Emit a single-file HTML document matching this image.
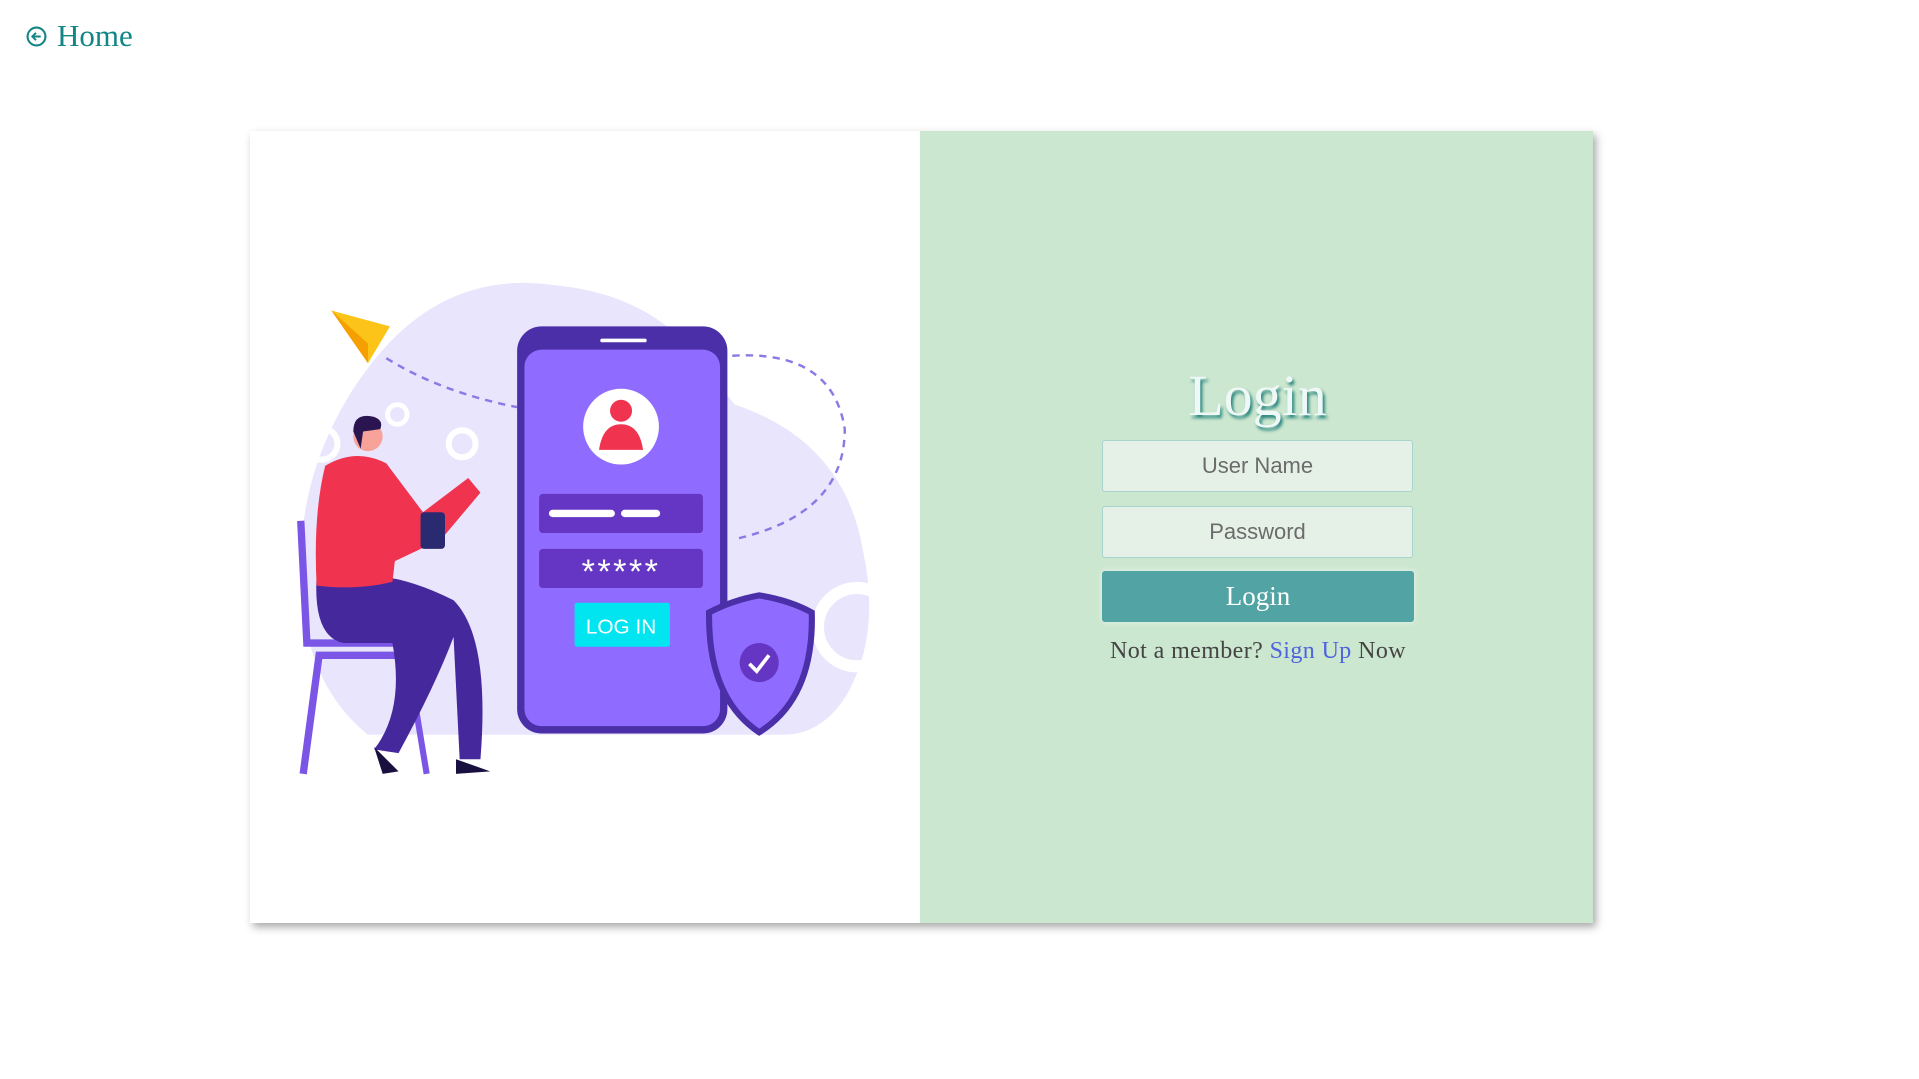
<!DOCTYPE html>
<html><head><meta charset="utf-8"><style>
html,body{margin:0;padding:0;background:#fff;width:1919px;height:1079px;overflow:hidden;font-family:"Liberation Serif",serif;}
.home{position:absolute;left:26px;top:18px;color:#128585;font-size:31px;display:flex;align-items:center;gap:10px;}
.card{position:absolute;left:250px;top:131px;width:1343px;height:792px;box-shadow:3px 4px 8px rgba(0,0,0,.35);background:#fff;}
.right{position:absolute;left:670px;top:0;width:673px;height:792px;background:#cce7d0;}
.title{position:absolute;left:1102px;top:362px;width:311px;text-align:center;font-size:58px;color:#eef8f6;text-shadow:2px 3px 3px #1d7f78;}
.inp{position:absolute;left:1102px;width:311px;height:52px;background:#e5f1e6;border:1px solid #a9d3cf;border-radius:3px;text-align:center;font-family:"Liberation Sans",sans-serif;font-size:22px;color:#6b6b6b;line-height:50px;box-sizing:border-box;}
.btn{position:absolute;left:1102px;top:571px;width:312px;height:51px;background:#52a3a3;border-radius:3px;color:#fff;text-align:center;line-height:50px;font-size:27px;box-shadow:0 0 6px rgba(255,255,255,.6);}
.note{position:absolute;left:1058px;top:638px;width:400px;text-align:center;font-size:24px;letter-spacing:0.4px;color:#444;}
.note span{color:#4e63dd;}
svg.ill{position:absolute;left:0;top:0;}
</style></head><body>
<div class="home"><svg width="21" height="21" viewBox="0 0 20 20"><circle cx="10" cy="10" r="8.5" fill="none" stroke="#128585" stroke-width="2"/><path d="M14 10H6M9.5 6.5L6 10l3.5 3.5" fill="none" stroke="#128585" stroke-width="1.8"/></svg>Home</div>
<div class="card"><div class="right"></div></div>
<svg class="ill" width="1919" height="1079" viewBox="-1 -1 1569.7 882.6">
<path d="M300 300 Q360 220 450 232 Q520 238 560 280 L600 330 Q690 360 705 450 Q720 520 690 570 Q670 600 640 600 L300 600 Q250 560 245 480 Q240 380 300 300Z" fill="#e8e5fd"/>
<circle cx="490" cy="262" r="22" fill="#e8e5fd"/>
<circle cx="700" cy="512" r="32" fill="none" stroke="#fff" stroke-width="10"/>
<circle cx="324" cy="338" r="8" fill="none" stroke="#fff" stroke-width="4"/>
<circle cx="377" cy="362" r="11" fill="none" stroke="#fff" stroke-width="5"/>
<circle cx="262" cy="362" r="13" fill="none" stroke="#fff" stroke-width="5"/>
<path d="M315 292 Q360 320 422 332" fill="none" stroke="#8b7ae6" stroke-width="2" stroke-dasharray="6 5"/>
<path d="M598 290 Q680 285 690 350 Q690 420 600 440" fill="none" stroke="#8b7ae6" stroke-width="2" stroke-dasharray="6 5"/>
<path d="M270 253 L318 266 L300 296Z" fill="#fcc419"/><path d="M270 253 L300 280 L300 296Z" fill="#f59f00"/>
<rect x="422" y="266" width="172" height="333" rx="20" fill="#4a2fa8"/>
<rect x="428" y="285" width="160" height="308" rx="14" fill="#8f6cff"/>
<rect x="490" y="276" width="38" height="3" rx="1.5" fill="#fff"/>
<circle cx="507" cy="348" r="31" fill="#fff"/>
<circle cx="507" cy="335" r="9" fill="#f0344f"/><path d="M489 367 Q492 346 507 346 Q522 346 525 367Z" fill="#f0344f"/>
<rect x="440" y="403" width="134" height="32" rx="3" fill="#6535c3"/>
<rect x="448" y="416" width="54" height="6" rx="3" fill="#fff"/><rect x="507" y="416" width="32" height="6" rx="3" fill="#fff"/>
<rect x="440" y="448" width="134" height="32" rx="3" fill="#6535c3"/>
<text x="507" y="476" font-family="Liberation Sans,sans-serif" font-size="28" fill="#fff" text-anchor="middle" letter-spacing="2">*****</text>
<rect x="469" y="492" width="78" height="36" rx="2" fill="#00e5f0"/>
<text x="507" y="517" font-family="Liberation Sans,sans-serif" font-size="17" fill="#fff" text-anchor="middle">LOG IN</text>
<path d="M620 486 Q645 490 663 500 Q665 570 620 598 Q578 570 579 500 Q598 490 620 486Z" fill="#8f6cff" stroke="#4a2fa8" stroke-width="5"/>
<circle cx="620" cy="541" r="16" fill="#6535c3"/><path d="M612 542 L618 548 L628 535" fill="none" stroke="#fff" stroke-width="3"/>
<path d="M245 425 L250 525 L340 525 L340 535 L260 535 L247 632" fill="none" stroke="#7a55e6" stroke-width="6"/>
<path d="M332 535 L348 632" stroke="#7a55e6" stroke-width="5"/>
<path d="M258 470 Q255 520 280 525 L320 525 Q330 580 305 612 L325 615 Q355 560 370 520 L375 620 L392 620 Q400 520 370 490 Q330 470 300 470Z" fill="#45289c"/>
<path d="M265 380 Q290 365 315 378 L345 418 L382 390 L392 402 L360 440 L322 458 L320 475 Q290 482 258 478 Q255 420 265 380Z" fill="#f0344f"/>
<rect x="343" y="418" width="20" height="30" rx="3" fill="#2a2a70"/>
<circle cx="300" cy="356" r="12" fill="#f7a399"/><path d="M288 352 Q288 336 305 340 Q313 343 310 350 L296 352 L294 366Z" fill="#2a1550"/>
<path d="M305 610 L325 630 L312 632Z" fill="#1a1040"/><path d="M372 620 L400 630 L372 632Z" fill="#1a1040"/>
</svg>
<div class="title">Login</div>
<div class="inp" style="top:440px">User Name</div>
<div class="inp" style="top:506px">Password</div>
<div class="btn">Login</div>
<div class="note">Not a member? <span>Sign Up</span> Now</div>
</body></html>
